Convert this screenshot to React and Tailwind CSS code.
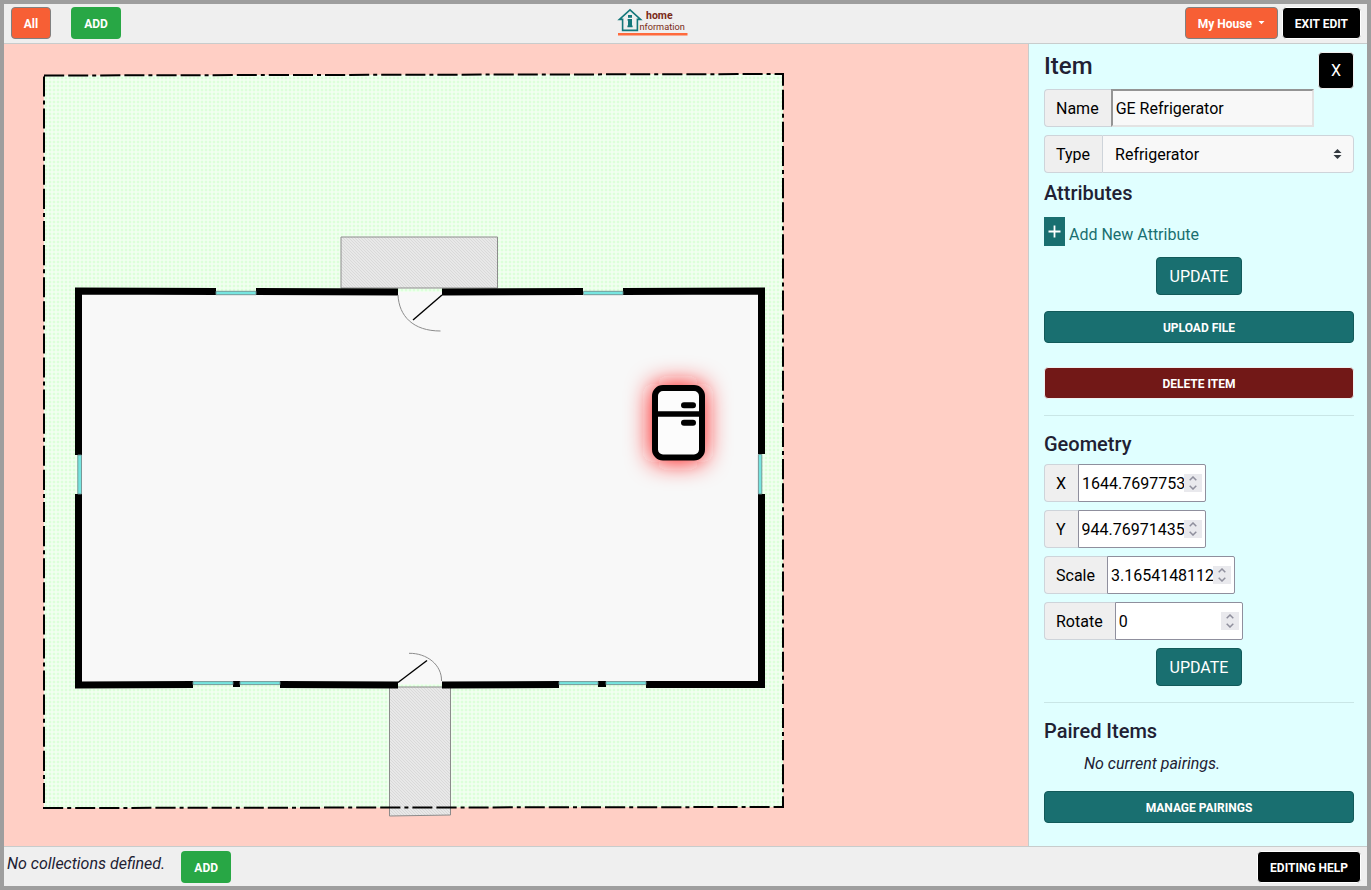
import React from 'react';

const addonClass =
  'flex items-center rounded-l border border-r-0 border-[#ced4da] bg-[#efefef] pt-0.5 pr-3 pl-[11px] text-black';

const smallButton = 'h-8 rounded pt-0.5 text-xs font-bold text-white';

function Logo() {
  return (
    <svg width="72" height="30" viewBox="617 8 72 30" role="img" aria-label="home information">
      <g fill="none" stroke="#14777a" strokeWidth="1.6">
        <path d="M630 9.8 L640.6 19.4 H637.4 V30.4 H622.6 V19.4 H619.4 Z" />
      </g>
      <g fill="#14777a">
        <rect x="628" y="15" width="4" height="2.8" />
        <path d="M627.6 19 H632 V25.4 H632.6 V27.2 H627.4 V25.4 H628 V20.8 H627.6 Z" />
      </g>
      <g fill="#7a2a18" fontFamily="Roboto, sans-serif">
        <text x="646" y="18.5" fontSize="10.5" fontWeight="700">home</text>
        <text x="639.5" y="30" fontSize="9.2">nformation</text>
      </g>
      <path d="M618 34.3 H687.5" stroke="#ff6a3c" strokeWidth="2.4" />
    </svg>
  );
}

function FloorPlan() {
  return (
    <svg
      className="block h-full w-full"
      viewBox="4 44 1024 802"
      preserveAspectRatio="xMinYMin meet"
      role="img"
      aria-label="Floor plan of My House"
    >
      <defs>
        <pattern id="grass" width="4" height="4" patternUnits="userSpaceOnUse">
          <rect width="4" height="4" fill="#f1fff0" />
          <path d="M2 0 V4 M0 2 H4" stroke="#ecffeb" strokeWidth="2" />
          <rect x="1" y="1" width="2" height="2" fill="#dcffda" />
        </pattern>
        <pattern id="hatch" width="3" height="3" patternUnits="userSpaceOnUse">
          <rect width="3" height="3" fill="#e8e8e8" />
          <path d="M-1 -1 L4 4 M-1 2 L1 4 M2 -1 L4 1" stroke="#d2d2d2" strokeWidth="0.7" />
        </pattern>
        <filter id="glow" x="-100%" y="-100%" width="300%" height="300%">
          <feGaussianBlur stdDeviation="12" />
        </filter>
      </defs>

      <path d="M44 75.5 L783 74 V807 L44 808 Z" fill="url(#grass)" />
      <path d="M341 288 V237 H497.5 V288 Z" fill="url(#hatch)" stroke="#8c8c8c" />
      <path d="M389.5 687 H450.5 V815 L389.5 816 Z" fill="url(#hatch)" stroke="#8c8c8c" />
      <path
        d="M44 75.5 L783 74 V807 L44 808 Z"
        fill="none"
        stroke="#000"
        strokeWidth="2"
        strokeDasharray="20.2 4 20 4 4 4"
      />

      <path d="M78 292 H761 V684 H78 Z" fill="#f8f8f8" />
      <g fill="none" stroke="#000" strokeWidth="7">
        <path d="M216 291.5 L78.5 291 V455" />
        <path d="M78.5 494 V685 L193 684.5" />
        <path d="M256 291.5 L398 292" />
        <path d="M442 292 L583 291.5" />
        <path d="M623 291.5 L761.5 291 V454" />
        <path d="M761.5 494 V684.5 H646" />
        <path d="M233 684 H240" strokeWidth="6" />
        <path d="M280 684.5 L398 685" />
        <path d="M442 685 L559 684.5" />
        <path d="M598 684 H606" strokeWidth="6" />
      </g>
      <g fill="#76e5e0" stroke="#6f8f8f" strokeWidth="0.9">
        <path d="M216 291.3 H256 V294.7 H216 Z M583.5 291.3 H623 V294.7 H583.5 Z" />
        <path d="M77.8 455 H81.5 V494 H77.8 Z M758.4 454.5 H761.8 V494 H758.4 Z" />
        <path d="M193 681.6 H233 V684.6 H193 Z M240 681.6 H280 V684.6 H240 Z" />
        <path d="M559 681.6 H598 V684.6 H559 Z M606 681.6 H646 V684.6 H606 Z" />
      </g>

      <g fill="none">
        <path d="M398 295 C399 316 413 331 440.5 331" stroke="#8c8c8c" />
        <path d="M442 295 L413 320" stroke="#000" strokeWidth="1.4" />
        <path d="M441.5 681 C442 665 427 653 409 653.3" stroke="#8c8c8c" />
        <path d="M398 682.5 L427 660.5" stroke="#000" strokeWidth="1.4" />
      </g>

      <rect x="651" y="384" width="54" height="78" rx="10" fill="#ff1818" filter="url(#glow)" />
      <g stroke="#000" strokeWidth="6" strokeLinecap="round">
        <rect x="655" y="388" width="47" height="69.5" rx="8" fill="#fcfcfc" />
        <path d="M655 414 H702" strokeWidth="5.6" />
        <path d="M684 405.3 H693 M684 422.7 H693" />
      </g>
    </svg>
  );
}

function UpdateButton() {
  return (
    <button
      type="button"
      className="h-[38px] w-[86px] self-center rounded border border-[#125a5a] bg-[#196f70] pt-0.5 text-base leading-6 text-white"
    >
      UPDATE
    </button>
  );
}

function WideButton({ children, danger }) {
  return (
    <button
      type="button"
      className={
        smallButton + ' w-full border ' +
        (danger ? 'border-[#f0f0f0] bg-[#721817]' : 'border-[#125a5a] bg-[#196f70]')
      }
    >
      {children}
    </button>
  );
}

function NumberField({ id, label, value }) {
  const [current, setCurrent] = React.useState(value);
  const step = (amount) => setCurrent(String(Number(current) + amount));
  return (
    <div className="flex h-[38px]">
      <label htmlFor={id} className={addonClass}>{label}</label>
      <div className="flex w-32 items-center rounded-r-xs border border-[#8f8f9d] bg-white px-[3px]">
        <input
          id={id}
          type="number"
          step="any"
          value={current}
          onChange={(e) => setCurrent(e.target.value)}
          className="w-0 min-w-0 flex-1 bg-transparent pt-0.5 text-base text-black outline-none [appearance:textfield] [&::-webkit-inner-spin-button]:appearance-none"
        />
        <div className="flex h-[18px] w-[18px] flex-col bg-[#e9e9ed]">
          <button type="button" aria-label={'Increase ' + label} onClick={() => step(1)} className="flex h-[9px] items-center justify-center">
            <svg width="8" height="5" viewBox="0 0 8 5" fill="none" stroke="#8f8f9d" strokeWidth="1.5"><path d="M0.7 4.3 L4 1 L7.3 4.3" /></svg>
          </button>
          <button type="button" aria-label={'Decrease ' + label} onClick={() => step(-1)} className="flex h-[9px] items-center justify-center">
            <svg width="8" height="5" viewBox="0 0 8 5" fill="none" stroke="#8f8f9d" strokeWidth="1.5"><path d="M0.7 0.7 L4 4 L7.3 0.7" /></svg>
          </button>
        </div>
      </div>
    </div>
  );
}

function ItemPanel() {
  return (
    <aside className="flex w-[339px] shrink-0 flex-col border-l border-[#c8cccc] bg-[#e0ffff] pt-2 pr-[13px] pb-4 pl-[15px]">
      <div className="flex h-[37px] items-start justify-between">
        <h1 className="text-2xl leading-7 font-medium">Item</h1>
        <button type="button" aria-label="Close item" className="h-[37px] w-9 rounded border border-[#f0f0f0] bg-black text-base text-white">
          X
        </button>
      </div>

      <div className="flex h-[38px]">
        <label htmlFor="name" className={addonClass}>Name</label>
        <input
          id="name"
          type="text"
          defaultValue="GE Refrigerator"
          className="w-[203px] border-2 border-t-[#949494] border-r-[#e3e3e3] border-b-[#e3e3e3] border-l-[#949494] bg-[#f8f8f8] pt-0.5 pr-0.5 pl-[3px] text-base text-black outline-none"
        />
      </div>
      <div className="mt-2 flex h-[38px]">
        <label htmlFor="type" className={addonClass}>Type</label>
        <div className="relative flex-1">
          <select
            id="type"
            defaultValue="Refrigerator"
            className="h-full w-full appearance-none rounded-r border border-[#ced4da] bg-[#f8f8f8] pt-0.5 pr-7 pl-3 text-base text-black outline-none"
          >
            <option>Refrigerator</option>
          </select>
          <svg className="pointer-events-none absolute top-1/2 right-3 -translate-y-1/2" width="9" height="10" viewBox="0 0 4 5">
            <path fill="#343a40" d="M2 0L0 2h4zm0 5L0 3h4z" />
          </svg>
        </div>
      </div>

      <h2 className="mt-2 text-xl leading-6 font-medium">Attributes</h2>
      <a href="#new-attribute" className="mt-3 flex h-[29px] items-center gap-1 self-start text-[#196f70]">
        <span className="flex h-[29px] w-[21px] items-center justify-center bg-[#196f70] text-white">
          <svg width="13" height="13" viewBox="0 0 13 13" stroke="currentColor" strokeWidth="1.8" aria-hidden="true">
            <path d="M6.5 0.5 V12.5 M0.5 6.5 H12.5" />
          </svg>
        </span>
        <span className="pt-1.5">Add New Attribute</span>
      </a>
      <div className="mt-[11px] flex flex-col"><UpdateButton /></div>
      <div className="mt-4"><WideButton>UPLOAD FILE</WideButton></div>
      <div className="mt-6"><WideButton danger>DELETE ITEM</WideButton></div>

      <hr className="my-4 border-[#c9e6e6]" />

      <h2 className="text-xl leading-6 font-medium">Geometry</h2>
      <div className="mt-2 flex flex-col gap-2">
        <NumberField id="x" label="X" value="1644.7697753" />
        <NumberField id="y" label="Y" value="944.76971435" />
        <NumberField id="scale" label="Scale" value="3.1654148112" />
        <NumberField id="rotate" label="Rotate" value="0" />
        <UpdateButton />
      </div>

      <hr className="my-4 border-[#c9e6e6]" />

      <h2 className="text-xl leading-6 font-medium">Paired Items</h2>
      <p className="mt-[9px] pl-10 leading-6 italic">No current pairings.</p>
      <div className="mt-[15px]"><WideButton>MANAGE PAIRINGS</WideButton></div>
    </aside>
  );
}

export default function App() {
  return (
    <div className="flex min-h-screen flex-col border-4 border-[#9e9e9e] bg-[#efefef] font-[Roboto,sans-serif] text-base text-[#212133]">
      <header className="flex h-10 items-start justify-between border-b border-[#c8cccc] pr-1.5 pl-[7px]">
        <div className="flex gap-5 pt-[3px]">
          <button type="button" className={smallButton + ' w-10 border border-[#808080] bg-[#f75f35]'}>All</button>
          <button type="button" className={smallButton + ' w-[50px] bg-[#28a745]'}>ADD</button>
        </div>
        <a href="#home" className="pt-1"><Logo /></a>
        <div className="flex justify-end gap-1 pt-[3px]">
          <button type="button" className={smallButton + ' flex items-center gap-1.5 border border-[#808080] bg-[#f75f35] px-3'}>
            My House
            <svg width="7" height="4" viewBox="0 0 7 4" className="mb-0.5" aria-hidden="true"><path d="M0.5 0 H6.5 L3.5 3.2 Z" fill="#fff" /></svg>
          </button>
          <button type="button" className={smallButton + ' border border-white bg-black px-3'}>EXIT EDIT</button>
        </div>
      </header>

      <div className="flex flex-1">
        <main className="min-w-0 flex-1 bg-[#ffcfc5]"><FloorPlan /></main>
        <ItemPanel />
      </div>

      <footer className="flex h-10 items-start justify-between border-t border-[#c8cccc] pt-1 pr-1.5 pl-[3px]">
        <div className="flex gap-4">
          <p className="pt-px leading-6 italic">No collections defined.</p>
          <button type="button" className={smallButton + ' w-[50px] bg-[#28a745]'}>ADD</button>
        </div>
        <button type="button" className={smallButton + ' border border-white bg-black px-3'}>EDITING HELP</button>
      </footer>
    </div>
  );
}
